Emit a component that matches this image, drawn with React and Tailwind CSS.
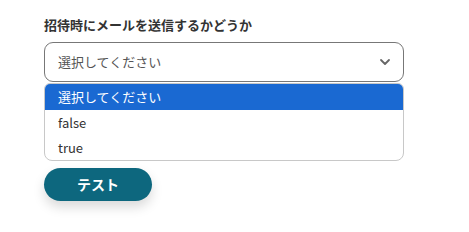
import React from 'react';

const options = ['選択してください', 'false', 'true'];

const App = () => {
  return (
    <div
      className="w-[469px] h-[232px] bg-white pl-[44px] pt-[16px]"
      style={{ fontFamily: '"Noto Sans CJK JP", "Noto Sans", sans-serif' }}
    >
      <div className="w-[360px]">
        <label className="block text-[13px] font-bold text-[#333] leading-[18px]">
          招待時にメールを送信するかどうか
        </label>

        {/* Select */}
        <div className="mt-[8px] h-[40px] border border-[#777] rounded-[9px] flex items-center justify-between pl-[13px] pr-[12px]">
          <span className="text-[13px] text-[#555]">選択してください</span>
          <svg width="12" height="8" viewBox="0 0 12 8" fill="none">
            <path d="M2 2l4 4 4-4" stroke="#666" strokeWidth="1.8" strokeLinecap="round" strokeLinejoin="round" />
          </svg>
        </div>

        {/* Options list */}
        <div className="mt-[1px] border border-[#c8c8c8] rounded-b-[8px] rounded-t-[6px] overflow-hidden">
          {options.map((opt, i) => (
            <div
              key={opt}
              className={
                i === 0
                  ? 'h-[26px] flex items-center pl-[13px] text-[13px] bg-[#1a69d2] text-white'
                  : 'h-[25px] flex items-center pl-[13px] text-[13px] text-[#333]'
              }
            >
              {opt}
            </div>
          ))}
        </div>
      </div>

      {/* Button */}
      <button className="mt-[7px] w-[108px] h-[33px] rounded-full bg-[#0d677e] text-white text-[14px] font-bold shadow-[0_6px_12px_rgba(0,0,0,0.15)]">
        テスト
      </button>
    </div>
  );
};

export default App;
